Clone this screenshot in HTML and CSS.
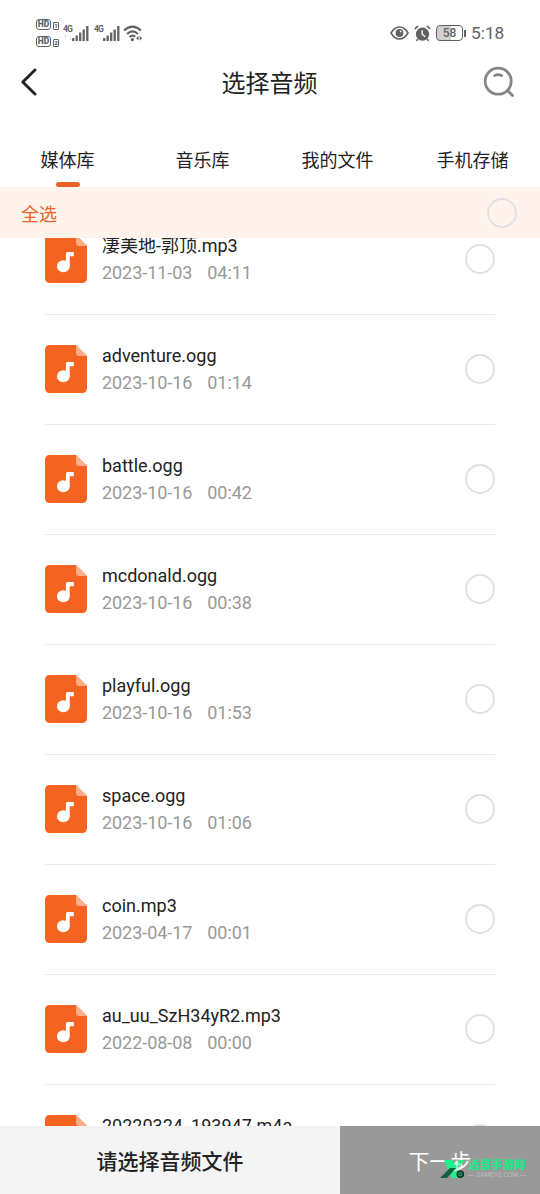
FILE: index.html
```html
<!DOCTYPE html>
<html lang="zh-CN">
<head>
<meta charset="utf-8">
<meta name="viewport" content="width=device-width, initial-scale=1">
<title>选择音频</title>
<link rel="stylesheet" href="styles.css">
</head>
<body>
<svg class="defs" width="0" height="0" aria-hidden="true">
  <symbol id="audio-file" viewBox="0 0 42 48">
    <path d="M5 0H31L42 11V43Q42 48 37 48H5Q0 48 0 43V5Q0 0 5 0Z" fill="#f4631f"/>
    <path d="M31 0L42 11H34Q31 11 31 8Z" fill="#fbad87"/>
    <ellipse cx="18.3" cy="31.2" rx="6.4" ry="6" fill="#fff"/>
    <path d="M20.9 32V18.4Q20.9 16.9 22.4 16.9H28.8V21.3H24.7V32Z" fill="#fff"/>
  </symbol>
  <symbol id="signal" viewBox="0 0 17 15">
    <path d="M1.2 12V15M4.7 9.5V15M8.2 6.5V15M11.7 3.5V15M15.3 0V15" stroke="#626262" stroke-width="2.3"/>
  </symbol>
</svg>
<div class="screen">
  <div class="status">
    <div class="sims">
      <div class="sim"><span class="hd">HD</span><span class="slot">1</span></div>
      <div class="sim"><span class="hd">HD</span><span class="slot">2</span></div>
    </div>
    <div class="network"><span class="gen">4G</span><span class="data">↑↓</span></div>
    <svg class="bars" width="17" height="15"><use href="#signal"/></svg>
    <div class="network second"><span class="gen">4G</span></div>
    <svg class="bars" width="17" height="15"><use href="#signal"/></svg>
    <svg class="wifi" width="21" height="17" viewBox="0 0 21 17" fill="none" stroke="#626262" stroke-width="2">
      <path d="M1 5.4Q9.5-2.2 18 5.4M4 8.9Q9.5 3.9 15 8.9M6.5 12Q9.5 9.4 12.2 11.7"/>
      <circle cx="9.4" cy="14.6" r="1.6" fill="#626262" stroke="none"/>
      <path d="M15.5 10.8L13 13.2L15.5 15.6ZM16.7 10.8L19.2 13.2L16.7 15.6Z" fill="#626262" stroke="none"/>
    </svg>
    <svg class="eye" width="19" height="14" viewBox="0 0 19 14">
      <path d="M1 7Q4.5 1 9.5 1T18 7Q14.5 13 9.5 13T1 7Z" fill="none" stroke="#626262" stroke-width="1.6"/>
      <circle cx="9.5" cy="7" r="3.9" fill="#626262"/>
      <circle cx="10.6" cy="5.4" r=".9" fill="#fff"/>
    </svg>
    <svg class="alarm" width="17" height="17" viewBox="0 0 17 17">
      <circle cx="8.5" cy="9.2" r="6.6" fill="#626262"/>
      <path d="M1 4.2Q2 2 4.4 1.2M16 4.2Q15 2 12.6 1.2M3.8 13.8L2.6 15.8M13.2 13.8L14.4 15.8" stroke="#626262" stroke-width="1.6" fill="none"/>
      <path d="M8.2 5.3V9.3L11.2 11.8" stroke="#fff" stroke-width="1.3" fill="none"/>
    </svg>
    <div class="battery">58</div>
    <span class="nub"></span>
    <span class="clock">5:18</span>
  </div>

  <header class="header">
    <svg class="back" width="18" height="28" viewBox="0 0 18 28"><path d="M15 2L2.8 14L15 26" fill="none" stroke="#222" stroke-width="2.9" stroke-linecap="round" stroke-linejoin="round"/></svg>
    <h1 class="title">选择音频</h1>
    <svg class="search" width="32" height="32" viewBox="0 0 32 32" fill="none" stroke="#858585" stroke-width="2.8" stroke-linecap="round"><circle cx="15.2" cy="15.2" r="13"/><path d="M11.7 9.6Q15 7.6 18.6 9.6M24.5 24.5L29.5 29.5"/></svg>
  </header>

  <nav class="tabs">
    <div class="tab active">媒体库</div>
    <div class="tab">音乐库</div>
    <div class="tab">我的文件</div>
    <div class="tab">手机存储</div>
  </nav>

  <div class="select-all"><span>全选</span><span class="radio"></span></div>

  <main class="list">
    <div class="rows">
      <div class="row"><svg class="file" width="42" height="48"><use href="#audio-file"/></svg><div class="info"><div class="name">凄美地-郭顶.mp3</div><div class="meta"><span>2023-11-03</span><span>04:11</span></div></div><span class="radio"></span></div>
      <div class="row"><svg class="file" width="42" height="48"><use href="#audio-file"/></svg><div class="info"><div class="name">adventure.ogg</div><div class="meta"><span>2023-10-16</span><span>01:14</span></div></div><span class="radio"></span></div>
      <div class="row"><svg class="file" width="42" height="48"><use href="#audio-file"/></svg><div class="info"><div class="name">battle.ogg</div><div class="meta"><span>2023-10-16</span><span>00:42</span></div></div><span class="radio"></span></div>
      <div class="row"><svg class="file" width="42" height="48"><use href="#audio-file"/></svg><div class="info"><div class="name">mcdonald.ogg</div><div class="meta"><span>2023-10-16</span><span>00:38</span></div></div><span class="radio"></span></div>
      <div class="row"><svg class="file" width="42" height="48"><use href="#audio-file"/></svg><div class="info"><div class="name">playful.ogg</div><div class="meta"><span>2023-10-16</span><span>01:53</span></div></div><span class="radio"></span></div>
      <div class="row"><svg class="file" width="42" height="48"><use href="#audio-file"/></svg><div class="info"><div class="name">space.ogg</div><div class="meta"><span>2023-10-16</span><span>01:06</span></div></div><span class="radio"></span></div>
      <div class="row"><svg class="file" width="42" height="48"><use href="#audio-file"/></svg><div class="info"><div class="name">coin.mp3</div><div class="meta"><span>2023-04-17</span><span>00:01</span></div></div><span class="radio"></span></div>
      <div class="row"><svg class="file" width="42" height="48"><use href="#audio-file"/></svg><div class="info"><div class="name">au_uu_SzH34yR2.mp3</div><div class="meta"><span>2022-08-08</span><span>00:00</span></div></div><span class="radio"></span></div>
      <div class="row"><svg class="file" width="42" height="48"><use href="#audio-file"/></svg><div class="info"><div class="name">20220324_193947.m4a</div></div><span class="radio"></span></div>
    </div>
  </main>

  <footer class="footer">
    <div class="hint">请选择音频文件</div>
    <div class="next">下一步
      <div class="watermark">
        <svg width="26" height="20" viewBox="0 0 26 20">
          <path d="M4 1H12L15 5L19 1H25L17 10L25 19H12L9 13Z" fill="#20ef8b"/>
          <path d="M10 9H16L7 19H0Z" fill="#176143"/>
          <path d="M14 5L20 5M17 2V11M20 8Q18 11 14 12" fill="none" stroke="#e6fff3" stroke-width="1.2"/>
          <circle cx="20.3" cy="15.3" r="3" fill="#20a968" stroke="#10291e" stroke-width="1.6"/>
          <circle cx="20.3" cy="15.3" r="1" fill="#10291e"/>
        </svg>
        <div class="brand"><span class="brand-name">远景手游网</span><span class="brand-site">GAMEYZ.COM</span></div>
      </div>
    </div>
  </footer>
</div>
</body>
</html>
```
FILE: styles.css
```css
* { box-sizing: border-box; }
body { margin: 0; background: #fff; color: #222; font-family: Roboto, "Noto Sans CJK SC", sans-serif; }
.defs { position: absolute; }
.screen { width: 540px; height: 1194px; display: flex; flex-direction: column; overflow: hidden; }

.status { flex: none; height: 57px; display: flex; align-items: center; padding: 9px 0 0 36px; color: #626262; }
.sims { display: flex; flex-direction: column; gap: 6px; width: 27px; }
.sim { display: flex; align-items: flex-end; gap: 2px; height: 11px; }
.hd { width: 15px; height: 11px; border: 1px solid #626262; border-radius: 3px; font-size: 8.5px; line-height: 9px; font-weight: 900; display: flex; justify-content: center; }
.slot { width: 6px; height: 8px; border: 1px solid #626262; border-radius: 1px; font-size: 6px; line-height: 6px; font-weight: 900; display: flex; justify-content: center; }
.network { display: flex; flex-direction: column; width: 9px; height: 16px; }
.network.second { margin-left: 5px; }
.gen { font-size: 8.5px; line-height: 9px; font-weight: 700; letter-spacing: -.8px; }
.data { font-size: 5px; line-height: 6px; color: #bbb; }
.bars { flex: none; }
.wifi { margin: 0 0 0 3px; }
.eye { margin-left: 246px; }
.alarm { margin-left: 5px; }
.battery { width: 27px; height: 16px; margin-left: 5px; border: 1.6px solid #626262; border-radius: 4px; background: linear-gradient(90deg, #d0d0d0 56%, #fff 56%); font-size: 12px; line-height: 14px; font-weight: 500; text-align: center; }
.nub { width: 2px; height: 7px; margin-left: 1px; background: #626262; }
.clock { margin-left: 5px; font-size: 17.3px; line-height: 20px; }

.header { flex: none; height: 54px; display: flex; align-items: center; justify-content: space-between; padding: 0 25px 5px 20px; }
.title { margin: 0 0 0 8px; padding: 4px 0 0 10px; font-size: 24px; line-height: 32px; font-weight: 400; }

.tabs { flex: none; height: 76px; display: grid; grid-template-columns: repeat(4, 1fr); }
.tab { display: flex; flex-direction: column; align-items: center; justify-content: flex-end; padding-bottom: 13px; font-size: 18px; line-height: 26px; }
.tab.active { padding-bottom: 0; }
.tab.active::after { content: ""; width: 24px; height: 5px; margin-top: 8px; border-radius: 3px; background: #e8622a; }

.select-all { flex: none; height: 51px; display: flex; align-items: center; justify-content: space-between; padding: 0 23px 0 21px; background: #fff3ec; color: #e8622a; font-size: 18px; }
.radio { flex: none; width: 30px; height: 30px; border: 2px solid #e0e0e0; border-radius: 50%; }

.list { flex: 1; min-height: 0; overflow: hidden; }
.rows { margin-top: -33.5px; padding: 0 45px; }
.row { height: 110px; display: flex; align-items: flex-start; padding-top: 30px; border-bottom: 1.5px solid #e9e9e9; }
.file { flex: none; margin-right: 15px; margin-top: .8px; }
.info { flex: 1; font-size: 18px; }
.name { height: 27px; line-height: 22px; white-space: nowrap; }
.meta { display: flex; gap: 15px; line-height: 22px; letter-spacing: -.06px; color: #999; }
.row .radio { margin-top: 9.8px; }

.footer { flex: none; height: 68px; display: flex; font-size: 21px; }
.hint { width: 340px; display: flex; align-items: center; justify-content: center; background: #f4f4f4; font-weight: 500; }
.next { position: relative; width: 200px; display: flex; align-items: center; justify-content: center; background: #999; color: #fff; }
.watermark { position: absolute; left: 100px; top: 33px; display: flex; align-items: flex-start; gap: 2px; }
.brand { display: flex; flex-direction: column; align-items: center; }
.brand-name { color: #20e889; font-size: 11.4px; line-height: 12px; font-weight: 900; }
.brand-site { display: flex; align-items: center; gap: 2px; color: #bcbcbc; font-size: 6.5px; line-height: 8px; white-space: nowrap; }
.brand-site::before, .brand-site::after { content: ""; width: 6px; height: 1px; background: #b0b0b0; }
```
